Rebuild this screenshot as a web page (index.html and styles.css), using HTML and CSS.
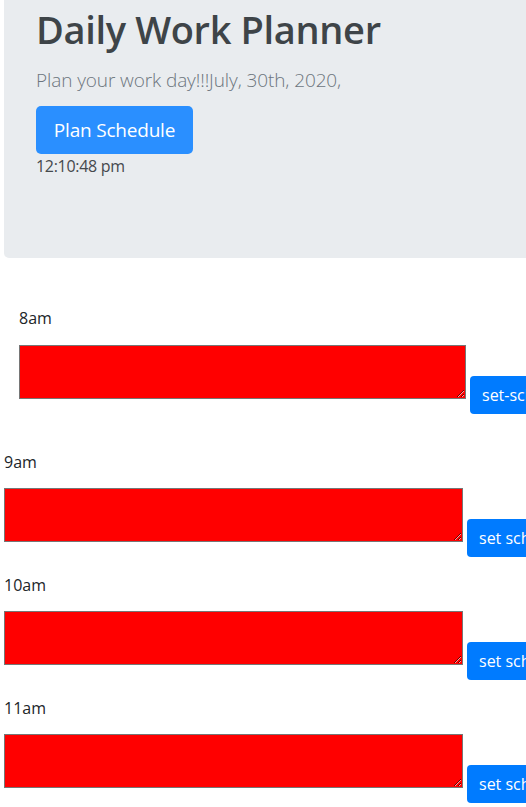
FILE: index.html
```html
<!DOCTYPE html>
<html lang="en">
<head>
<meta charset="utf-8">
<title>Daily Work Planner</title>
<link rel="stylesheet" href="styles.css">
</head>
<body>
<header class="jumbotron">
  <h1 class="title">Daily Work Planner</h1>
  <p class="lead">Plan your work day!!!July, 30th, 2020,</p>
  <button class="btn-plan" type="button">Plan Schedule</button>
  <p class="clock">12:10:48 pm</p>
</header>

<section class="first">
  <div class="hour">
    <label class="hour-label">8am</label>
    <div class="hour-row">
      <textarea class="hour-text wide8"></textarea>
      <button class="btn-set" type="button">set-schedule</button>
    </div>
  </div>
</section>

<section class="rest">
  <div class="hour">
    <label class="hour-label">9am</label>
    <div class="hour-row">
      <textarea class="hour-text"></textarea>
      <button class="btn-set" type="button">set schedule</button>
    </div>
  </div>
  <div class="hour">
    <label class="hour-label">10am</label>
    <div class="hour-row">
      <textarea class="hour-text"></textarea>
      <button class="btn-set" type="button">set schedule</button>
    </div>
  </div>
  <div class="hour">
    <label class="hour-label">11am</label>
    <div class="hour-row">
      <textarea class="hour-text"></textarea>
      <button class="btn-set" type="button">set schedule</button>
    </div>
  </div>
</section>
</body>
</html>
```

FILE: styles.css
```css
html, body {
  overflow: hidden;
}

body {
  margin: 0;
  padding-left: 4px;
  font-family: "Open Sans", "Noto Sans", sans-serif;
  font-size: 16px;
  line-height: 24px;
  color: #212529;
  background: #fff;
}

.jumbotron {
  box-sizing: border-box;
  width: 640px;
  height: 258px;
  padding: 5px 32px 0;
  background: #e9ecef;
  border-radius: 0 0 5px 5px;
}

.title {
  margin: 0;
  font-size: 38px;
  line-height: 48px;
  font-weight: 600;
  letter-spacing: -0.35px;
  color: #3e4448;
}

.lead {
  margin: 13px 0 0;
  font-size: 19px;
  line-height: 28px;
  font-weight: 300;
  letter-spacing: -0.1px;
  color: #6c757d;
}

.btn-plan {
  margin-top: 12px;
  display: block;
  width: 157px;
  height: 48px;
  padding: 0;
  border: 0;
  border-radius: 5px;
  background: #2a8fff;
  color: #fff;
  font-family: inherit;
  font-size: 19px;
  letter-spacing: -0.2px;
}

.clock {
  margin: 0;
  letter-spacing: -0.3px;
  color: #45494d;
}

.first {
  padding: 48px 0 0 15px;
}

.hour-label {
  display: block;
  margin-bottom: 14px;
}

.first .hour-label {
  margin-bottom: 15px;
}

.hour-row {
  display: flex;
  align-items: flex-start;
  gap: 4px;
}

.hour-text {
  box-sizing: border-box;
  flex: none;
  width: 459px;
  height: 54px;
  margin: 0;
  border: 1px solid #767676;
  background: #ff0000;
  resize: vertical;
}

.wide8 {
  width: 447px;
}

.btn-set {
  flex: none;
  margin-top: 31px;
  height: 38px;
  padding: 0 12px;
  border: 0;
  border-radius: 4px;
  background: #007bff;
  color: #fff;
  font-family: inherit;
  font-size: 16px;
  white-space: nowrap;
}

.rest {
  padding-top: 36px;
}

.hour + .hour {
  margin-top: 16px;
}
```
